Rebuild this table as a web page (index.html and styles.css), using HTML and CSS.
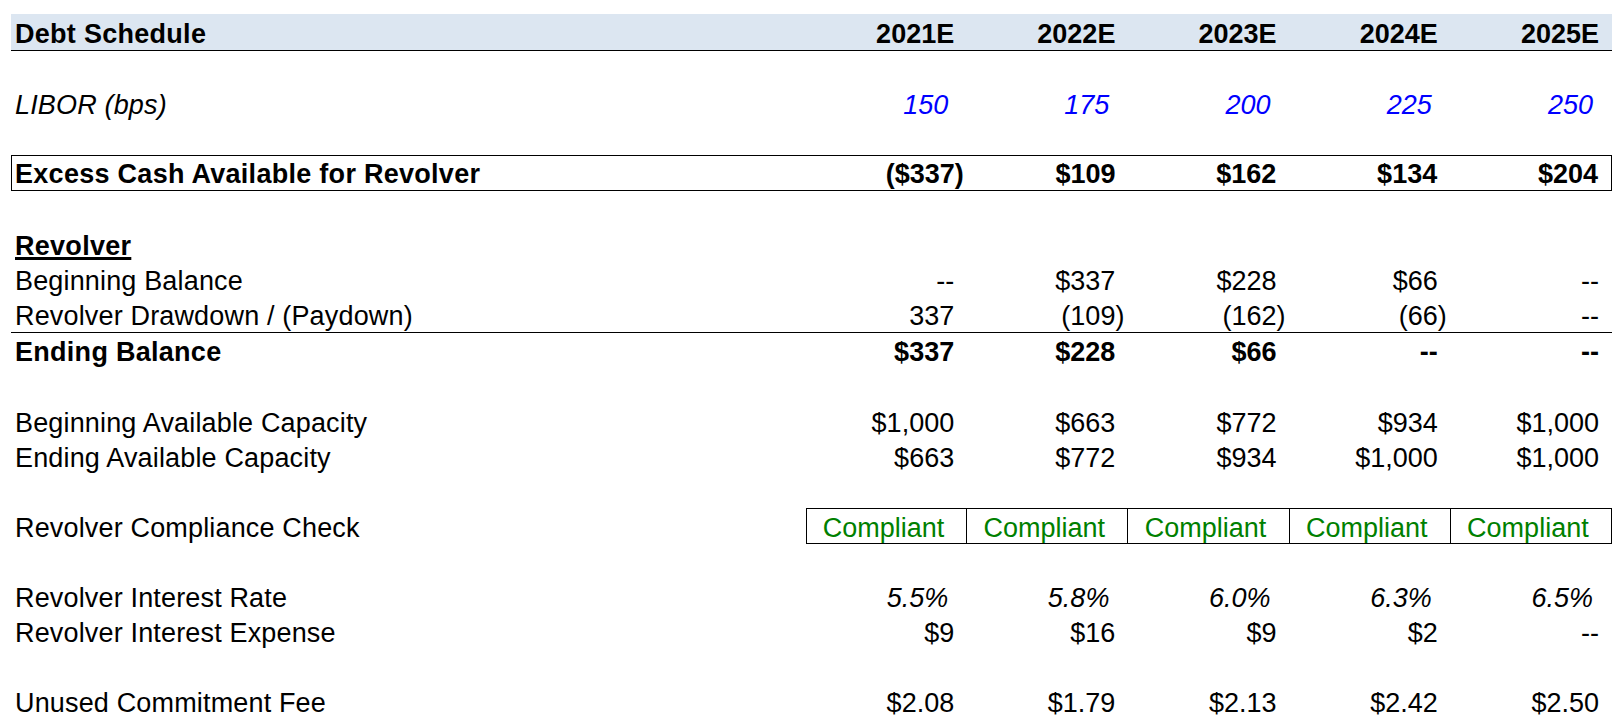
FILE: index.html
```html
<!DOCTYPE html>
<html lang="en">
<head>
<meta charset="utf-8">
<title>Debt Schedule</title>
<link rel="stylesheet" href="styles.css">
</head>
<body>
<div class="sheet">
  <div class="row head">
    <div class="label">Debt Schedule</div>
    <div class="num">2021E</div><div class="num">2022E</div><div class="num">2023E</div><div class="num">2024E</div><div class="num">2025E</div>
  </div>

  <div class="row libor">
    <div class="label">LIBOR (bps)</div>
    <div class="num ital blue">150</div><div class="num ital blue">175</div><div class="num ital blue">200</div><div class="num ital blue">225</div><div class="num ital blue">250</div>
  </div>

  <div class="row excess">
    <div class="label">Excess Cash Available for Revolver</div>
    <div class="num neg">($337)</div><div class="num">$109</div><div class="num">$162</div><div class="num">$134</div><div class="num">$204</div>
  </div>

  <div class="row revolver">
    <div class="label"><span class="under">Revolver</span></div>
  </div>
  <div class="row">
    <div class="label">Beginning Balance</div>
    <div class="num">--</div><div class="num">$337</div><div class="num">$228</div><div class="num">$66</div><div class="num">--</div>
  </div>
  <div class="row draw">
    <div class="label">Revolver Drawdown / (Paydown)</div>
    <div class="num">337</div><div class="num neg">(109)</div><div class="num neg">(162)</div><div class="num neg">(66)</div><div class="num">--</div>
  </div>
  <div class="row ending">
    <div class="label">Ending Balance</div>
    <div class="num">$337</div><div class="num">$228</div><div class="num">$66</div><div class="num">--</div><div class="num">--</div>
  </div>

  <div class="row capacity">
    <div class="label">Beginning Available Capacity</div>
    <div class="num">$1,000</div><div class="num">$663</div><div class="num">$772</div><div class="num">$934</div><div class="num">$1,000</div>
  </div>
  <div class="row">
    <div class="label">Ending Available Capacity</div>
    <div class="num">$663</div><div class="num">$772</div><div class="num">$934</div><div class="num">$1,000</div><div class="num">$1,000</div>
  </div>

  <div class="row compliance">
    <div class="label">Revolver Compliance Check</div>
    <div class="box first">Compliant</div><div class="box">Compliant</div><div class="box">Compliant</div><div class="box">Compliant</div><div class="box">Compliant</div>
  </div>

  <div class="row rate">
    <div class="label">Revolver Interest Rate</div>
    <div class="num ital">5.5%</div><div class="num ital">5.8%</div><div class="num ital">6.0%</div><div class="num ital">6.3%</div><div class="num ital">6.5%</div>
  </div>
  <div class="row">
    <div class="label">Revolver Interest Expense</div>
    <div class="num">$9</div><div class="num">$16</div><div class="num">$9</div><div class="num">$2</div><div class="num">--</div>
  </div>

  <div class="row unused">
    <div class="label">Unused Commitment Fee</div>
    <div class="num">$2.08</div><div class="num">$1.79</div><div class="num">$2.13</div><div class="num">$2.42</div><div class="num">$2.50</div>
  </div>
</div>
</body>
</html>
```

FILE: styles.css
```css
html, body {
  margin: 0;
  padding: 0;
  background: #ffffff;
}

body {
  font-family: "Liberation Sans", Arial, sans-serif;
  font-size: 27px;
  color: #000000;
}

.sheet {
  padding: 14px 0 0 11px;
}

.row {
  display: grid;
  grid-template-columns: 795px repeat(5, 1fr);
  width: 1601px;
  box-sizing: border-box;
  line-height: 35px;
  white-space: nowrap;
}

.label {
  padding-left: 4px;
  letter-spacing: 0.16px;
}

.num {
  text-align: right;
  padding-right: 13px;
}

.num.neg {
  padding-right: 4px;
}

.num.ital {
  font-style: italic;
  padding-right: 19px;
}

.blue {
  color: #0000ff;
}

.head {
  background: #dce6f1;
  border-bottom: 1px solid #000000;
  line-height: 30px;
  padding: 5px 0 1px;
  font-weight: bold;
}

.head .label,
.excess .label,
.revolver .label,
.ending .label {
  letter-spacing: 0.28px;
}

.libor {
  margin-top: 37px;
  line-height: 34px;
}

.libor .label {
  font-style: italic;
}

.excess {
  margin-top: 33px;
  border: 1px solid #000000;
  line-height: 30px;
  padding: 3px 0 1px;
  font-weight: bold;
}

.excess .label {
  padding-left: 3px;
}

.revolver {
  margin-top: 38px;
  font-weight: bold;
}

.under {
  text-decoration: underline;
  text-decoration-thickness: 3px;
  text-underline-offset: 2px;
}

.draw {
  height: 33px;
  border-bottom: 1px solid #000000;
  box-sizing: content-box;
}

.ending {
  padding-top: 2px;
  font-weight: bold;
}

.capacity {
  margin-top: 36px;
}

.compliance {
  margin-top: 32px;
  line-height: 30px;
}

.compliance .label {
  padding-top: 5px;
}

.box {
  border-top: 1px solid #000000;
  border-bottom: 1px solid #000000;
  border-right: 1px solid #000000;
  padding: 4px 6px 0 0;
  text-align: center;
  color: #008000;
}

.box.first {
  border-left: 1px solid #000000;
}

.rate {
  margin-top: 37px;
}

.unused {
  margin-top: 35px;
}
```
